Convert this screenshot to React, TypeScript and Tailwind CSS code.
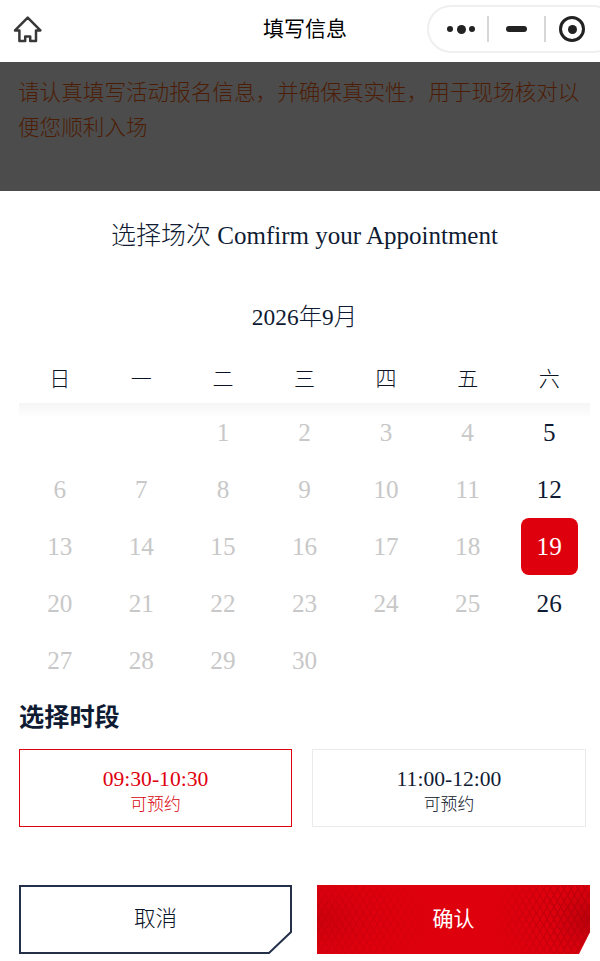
import React from 'react';

const serif = 'font-["Liberation_Serif","Noto_Sans_CJK_SC",serif]';
const sans = "font-['Noto_Sans_CJK_SC',sans-serif]";

const weekDays = ['日', '一', '二', '三', '四', '五', '六'];
const days: (number | null)[] = [null, null, ...Array.from({ length: 30 }, (_, i) => i + 1)];
const openDays = [5, 12, 19, 26];

const slots = [
  { time: '09:30-10:30', label: '可预约', active: true },
  { time: '11:00-12:00', label: '可预约', active: false },
];

const HomeIcon = () => (
  <svg width="32" height="32" viewBox="0 0 32 32" fill="none" stroke="#383838" strokeWidth="2.5" strokeLinejoin="round">
    <path d="M15.7 3.6 L28.4 16.4 H24 V27 H18.2 V22.5 H13.2 V27 H7.4 V16.4 H3 Z" />
  </svg>
);

// wechat mini program capsule, sits over the nav bar at the right edge
const Capsule = () => (
  <div className="absolute left-[427px] top-[5px] h-[48px] w-[190px] rounded-[24px] border-2 border-[#efefef] flex items-center">
    <div className="ml-[18px] flex items-center gap-[3.5px]">
      <span className="size-[6px] rounded-full bg-[#222]" />
      <span className="size-[9px] rounded-full bg-[#222]" />
      <span className="size-[6px] rounded-full bg-[#222]" />
    </div>
    <div className="w-[2px] h-[26px] ml-[12px] bg-[#d6d6d6]" />
    <div className="w-[21px] h-[6px] ml-[17px] rounded-full bg-[#222]" />
    <div className="w-[2px] h-[26px] ml-[17px] bg-[#d6d6d6]" />
    <div className="size-[26px] ml-[13px] rounded-full border-[3px] border-[#222] flex items-center justify-center">
      <span className="size-[9px] rounded-full bg-[#222]" />
    </div>
  </div>
);

export default function App() {
  return (
    <div className={`h-[961px] w-[600px] overflow-hidden bg-white ${serif} text-[#0f1b33]`}>
      <header className="h-[62px] flex items-center relative bg-white overflow-hidden">
        <div className="pl-[12px] w-[60px] -mt-[2px]"><HomeIcon /></div>
        <h1 className={`w-[490px] -mt-[6px] text-center text-[21px] font-normal text-black ${sans}`}>填写信息</h1>
        <Capsule />
      </header>

      <section className={`h-[129px] bg-[#4c4c4c] pl-[18px] pr-[19px] pt-[11px] text-[21.6px] leading-[35px] font-light text-[#4c1c05] ${sans}`}>
        请认真填写活动报名信息，并确保真实性，用于现场核对以便您顺利入场
      </section>

      <main className="pl-[19px] pr-[10px]">
        <h2 className="pt-[27px] text-center text-[25px] leading-[36px] font-light">选择场次 Comfirm your Appointment</h2>
        <p className="mt-[45px] text-center text-[23.4px] leading-[36px] font-light">2026年9月</p>

        <div className="mt-[16px] grid grid-cols-7 h-[52px] pt-[5px] items-center text-center text-[21px] font-light text-[#0a1226]">
          {weekDays.map(d => <span key={d}>{d}</span>)}
        </div>
        <div className="pt-[1px] grid grid-cols-7 text-center text-[25.2px] bg-[linear-gradient(#f5f5f5,#ffffff_15px)]">
          {days.map((d, i) => {
            const selected = d === 19;
            const open = d !== null && openDays.includes(d);
            return (
              <div key={i} className="h-[57px] flex items-center justify-center">
                {d !== null && (
                  <span
                    className={
                      selected
                        ? 'size-[57px] rounded-[8px] bg-[#df000e] text-white flex items-center justify-center'
                        : open ? 'text-[#0f1b33]' : 'text-[#c8c8c8]'
                    }
                  >
                    {d}
                  </span>
                )}
              </div>
            );
          })}
        </div>

        <h3 className={`mt-[8px] text-[25.2px] leading-[36px] font-bold ${sans}`}>选择时段</h3>
        <div className="mt-[16px] grid grid-cols-[273px_274px] gap-[20px]">
          {slots.map(s => (
            <div
              key={s.time}
              className={`h-[78px] pt-[4px] flex flex-col items-center justify-center border ${s.active ? 'border-[#df000e] text-[#df000e]' : 'border-[#ebebeb] text-[#0f1b33]'}`}
            >
              <span className="text-[21.6px] leading-[28px]">{s.time}</span>
              <span className={`mt-[1px] text-[16.8px] leading-[22px] font-light ${s.active ? 'text-[#d8000c]' : 'text-[#0a1226]'}`}>{s.label}</span>
            </div>
          ))}
        </div>

        <div className="mt-[58px] flex gap-[25px]">
          <div className="relative h-[69px] w-[273px] shrink-0 text-[#0a1226]">
            <svg className="absolute inset-0" width="273" height="69" viewBox="0 0 273 69" fill="none">
              <path d="M1 1 H272 V47 L250 68 H1 Z" stroke="#24304a" strokeWidth="2" />
            </svg>
            <span className="relative h-full flex items-center justify-center text-[21.6px] font-light">取消</span>
          </div>
          <div className="relative h-[69px] w-[273px] shrink-0 flex items-center justify-center text-[21px] text-white bg-[#df000e] [clip-path:polygon(0_0,100%_0,100%_47px,262px_100%,0_100%)]">
            <div className="absolute inset-y-0 left-0 w-[120px] bg-[repeating-linear-gradient(60deg,#bb000c_0_1.5px,transparent_1.5px_6px),repeating-linear-gradient(-60deg,#bb000c_0_1.5px,transparent_1.5px_6px),radial-gradient(ellipse_60px_50px_at_0%_50%,#c4000d,transparent)] opacity-70 [mask-image:radial-gradient(ellipse_100%_90%_at_0%_50%,black,transparent)]" />
            <div className="absolute inset-y-0 right-0 w-[100px] bg-[repeating-linear-gradient(60deg,#a8000b_0_1.5px,transparent_1.5px_6px),repeating-linear-gradient(-60deg,#a8000b_0_1.5px,transparent_1.5px_6px),radial-gradient(ellipse_40px_45px_at_100%_55%,#ad000b,transparent)] opacity-80 [mask-image:radial-gradient(ellipse_100%_100%_at_100%_45%,black,transparent)]" />
            <span className="relative">确认</span>
          </div>
        </div>
      </main>
    </div>
  );
}
